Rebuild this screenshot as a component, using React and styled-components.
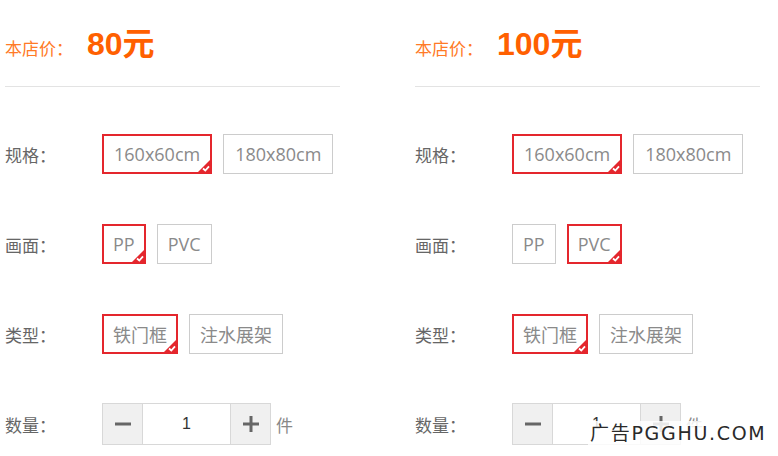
import styled, { createGlobalStyle } from "styled-components";

const GlobalStyle = createGlobalStyle`
  html, body {
    margin: 0;
    padding: 0;
    background: #fff;
    font-family: "Noto Sans CJK SC", "Noto Sans", sans-serif;
  }
`;

const Page = styled.div`
  position: relative;
  width: 778px;
  height: 456px;
  overflow: hidden;
  display: grid;
  grid-template-columns: 335px 345px;
  column-gap: 75px;
  padding-left: 5px;
  box-sizing: border-box;
`;

const Panel = styled.div`
  display: flex;
  flex-direction: column;
`;

const PriceRow = styled.div`
  height: 86px;
  display: flex;
  align-items: baseline;
  padding-top: 18px;
  box-sizing: border-box;
`;

const PriceLabel = styled.span`
  font-size: 17px;
  width: 82px;
  color: #ff7a26;
`;

const PriceValue = styled.span`
  font-size: 32px;
  font-weight: 700;
  color: #ff6000;
  font-family: "Liberation Sans", "Noto Sans CJK SC", sans-serif;
`;

const Divider = styled.div`
  height: 1px;
  background: #e3e3e3;
`;

const Rows = styled.div`
  display: flex;
  flex-direction: column;
  gap: 48px;
  padding-top: 46px;
`;

const Row = styled.div`
  display: flex;
  align-items: center;
  height: 42px;
`;

const Label = styled.span`
  width: 97px;
  font-size: 17px;
  color: #666;
`;

const Options = styled.div`
  display: flex;
  gap: 11px;
`;

const Option = styled.div`
  position: relative;
  height: 40px;
  padding: 0 ${(p) => (p.$latin ? 11 : 10)}px;
  display: flex;
  align-items: center;
  box-sizing: border-box;
  border: 1px solid ${(p) => (p.$active ? "#e4262d" : "#cccccc")};
  box-shadow: ${(p) => (p.$active ? "inset 0 0 0 1px #e4262d" : "none")};
  font-family: "Open Sans", "Noto Sans CJK SC", sans-serif;
  font-size: 18px;
  color: #8a8a8a;
  white-space: nowrap;
`;

const Corner = styled.svg`
  position: absolute;
  right: 0;
  bottom: 0;
  width: 14px;
  height: 14px;
`;

const Stepper = styled.div`
  display: flex;
  height: 42px;
  border: 1px solid #d8d8d8;
  box-sizing: border-box;
`;

const StepButton = styled.div`
  width: 39px;
  background: #f0f0f0;
  display: flex;
  align-items: center;
  justify-content: center;
  border-${(p) => p.$side}: 1px solid #d8d8d8;
`;

const StepInput = styled.div`
  width: 87px;
  display: flex;
  align-items: center;
  justify-content: center;
  font-size: 16px;
  color: #333;
  font-family: "Liberation Sans", sans-serif;
`;

const Unit = styled.span`
  margin-left: 5px;
  font-size: 17px;
  color: #888;
`;

const Watermark = styled.div`
  position: absolute;
  left: 588px;
  top: 421px;
  height: 24px;
  line-height: 24px;
  padding: 0 2px;
  background: rgba(255, 255, 255, 0.85);
  font-family: "DejaVu Sans", "Noto Sans CJK SC", sans-serif;
  font-size: 19px;
  letter-spacing: 1.7px;
  color: #2a2a2a;
`;

const Check = () => (
  <Corner viewBox="0 0 14 14">
    <polygon points="14,0 14,14 0,14" fill="#e4262d" />
    <polyline
      points="6,9.5 8.3,11.5 12,7.3"
      fill="none"
      stroke="#fff"
      strokeWidth="1.8"
    />
  </Corner>
);

const Minus = () => (
  <svg width="18" height="18" viewBox="0 0 18 18">
    <rect x="1" y="7.5" width="16" height="3" fill="#666" />
  </svg>
);

const Plus = () => (
  <svg width="18" height="18" viewBox="0 0 18 18">
    <rect x="1" y="7.5" width="16" height="3" fill="#666" />
    <rect x="7.5" y="1" width="3" height="16" fill="#666" />
  </svg>
);

const products = [
  { price: "80", size: 0, face: 0, kind: 0 },
  { price: "100", size: 0, face: 1, kind: 0 },
];

const groups = [
  { key: "size", label: "规格：", items: ["160x60cm", "180x80cm"], latin: true },
  { key: "face", label: "画面：", items: ["PP", "PVC"], latin: false },
  { key: "kind", label: "类型：", items: ["铁门框", "注水展架"], latin: false },
];

const App = () => (
  <>
    <GlobalStyle />
    <Page>
      {products.map((p) => (
        <Panel key={p.price}>
          <PriceRow>
            <PriceLabel>本店价：</PriceLabel>
            <PriceValue>{p.price}元</PriceValue>
          </PriceRow>
          <Divider />
          <Rows>
            {groups.map((g) => (
              <Row key={g.key}>
                <Label>{g.label}</Label>
                <Options>
                  {g.items.map((item, i) => (
                    <Option key={item} $latin={g.latin} $active={p[g.key] === i}>
                      {item}
                      {p[g.key] === i && <Check />}
                    </Option>
                  ))}
                </Options>
              </Row>
            ))}
            <Row>
              <Label>数量：</Label>
              <Stepper>
                <StepButton $side="right">
                  <Minus />
                </StepButton>
                <StepInput>1</StepInput>
                <StepButton $side="left">
                  <Plus />
                </StepButton>
              </Stepper>
              <Unit>件</Unit>
            </Row>
          </Rows>
        </Panel>
      ))}
      <Watermark>广告PGGHU.COM</Watermark>
    </Page>
  </>
);

export default App;
